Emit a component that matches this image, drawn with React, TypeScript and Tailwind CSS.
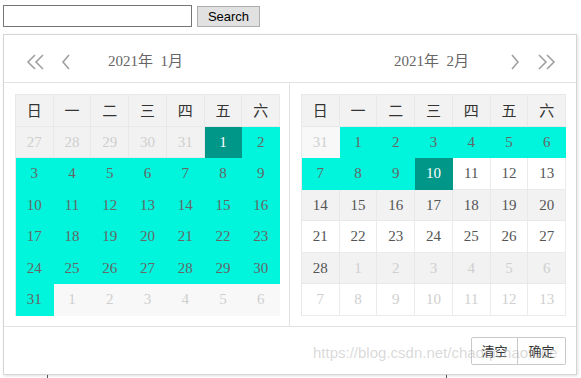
import React from "react";

type Kind =
  | "range"
  | "sel"
  | "norm"
  | "rowgray"
  | "outgray"
  | "out"
  | "outwhite";

type Cell = [string, Kind];

const WEEK = ["日", "一", "二", "三", "四", "五", "六"];

const cellClass: Record<Kind, string> = {
  range: "bg-[#00f5dc] border-[#00f5dc] text-[#666]",
  sel: "bg-[#009688] border-[#009688] text-white",
  norm: "bg-white border-[#ebebeb] text-[#555]",
  rowgray: "bg-[#f2f2f2] border-[#e8e8e8] text-[#555]",
  outgray: "bg-[#f2f2f2] border-[#e8e8e8] text-[#cfcfcf]",
  out: "bg-[#f8f8f8] border-[#f8f8f8] text-[#cfcfcf]",
  outwhite: "bg-white border-[#ebebeb] text-[#cfcfcf]",
};

const seq = (from: number, to: number, kind: Kind): Cell[] => {
  const out: Cell[] = [];
  for (let i = from; i <= to; i++) out.push([String(i), kind]);
  return out;
};

const januaryCells: Cell[] = [
  ...seq(27, 31, "outgray"),
  ["1", "sel"],
  ["2", "range"],
  ...seq(3, 31, "range"),
  ...seq(1, 6, "out"),
];

const februaryCells: Cell[] = [
  ["31", "out"],
  ...seq(1, 9, "range"),
  ["10", "sel"],
  ...seq(11, 13, "norm"),
  ...seq(14, 20, "rowgray"),
  ...seq(21, 27, "norm"),
  ["28", "rowgray"],
  ...seq(1, 6, "outgray"),
  ...seq(7, 13, "outwhite"),
];

const serif = "font-['Liberation_Serif','Noto_Sans_CJK_SC',serif]";
const cjk = "font-['Noto_Sans_CJK_SC','Liberation_Sans',sans-serif]";

const DoubleLeft = () => (
  <svg width="19" height="16" viewBox="0 0 19 16" fill="none" stroke="#a0a0a0" strokeWidth="1.6">
    <path d="M9 1 L2 8 L9 15" />
    <path d="M17 1 L10 8 L17 15" />
  </svg>
);

const SingleLeft = () => (
  <svg width="10" height="16" viewBox="0 0 10 16" fill="none" stroke="#a0a0a0" strokeWidth="1.6">
    <path d="M8 1 L2 8 L8 15" />
  </svg>
);

const SingleRight = () => (
  <svg width="10" height="16" viewBox="0 0 10 16" fill="none" stroke="#a0a0a0" strokeWidth="1.6">
    <path d="M2 1 L8 8 L2 15" />
  </svg>
);

const DoubleRight = () => (
  <svg width="19" height="16" viewBox="0 0 19 16" fill="none" stroke="#a0a0a0" strokeWidth="1.6">
    <path d="M2 1 L9 8 L2 15" />
    <path d="M10 1 L17 8 L10 15" />
  </svg>
);

const MonthTable: React.FC<{ cells: Cell[] }> = ({ cells }) => (
  <div className="grid grid-cols-7 grid-rows-7 w-[265px] h-[222px] border-l border-t border-[#e8e8e8]">
    {WEEK.map((w) => (
      <div
        key={w}
        className={`flex items-center justify-center bg-[#f2f2f2] border-r border-b border-[#e8e8e8] text-[15px] text-[#333] ${cjk}`}
      >
        {w}
      </div>
    ))}
    {cells.map(([label, kind], i) => (
      <div
        key={i}
        className={`flex items-center justify-center border-r border-b text-[15px] ${serif} ${cellClass[kind]}`}
      >
        {label}
      </div>
    ))}
  </div>
);

const App: React.FC = () => {
  return (
    <div className="w-[581px] h-[378px] bg-white overflow-hidden relative font-['Liberation_Sans',sans-serif]">
      <div className="flex items-center gap-[5px] pl-[3px] pt-[5px]">
        <input className="w-[189px] h-[22px] border border-[#767676] outline-none px-1 text-[13px]" />
        <button className="w-[63px] h-[21px] bg-[#e1e1e1] border border-[#adadad] text-[13px] text-black leading-none">
          Search
        </button>
      </div>

      <div className="ml-[3px] mt-[7px] w-[574px] h-[341px] border border-[#d6d6d6] bg-white shadow-[1px_1px_3px_rgba(0,0,0,0.12)] flex flex-col">
        <div className="flex h-[48px] pt-[6px] border-b border-[#e2e2e2]">
          <div className="w-[286px] flex items-center pl-[22px] relative">
            <DoubleLeft />
            <span className="ml-[16px]">
              <SingleLeft />
            </span>
            <span className={`absolute left-[104px] text-[15px] text-[#666] ${serif}`}>
              2021年&nbsp;&nbsp;1月
            </span>
          </div>
          <div className="flex-1 flex items-center justify-end pr-[20px] relative">
            <span className={`absolute left-[104px] text-[15px] text-[#666] ${serif}`}>
              2021年&nbsp;&nbsp;2月
            </span>
            <SingleRight />
            <span className="ml-[17px]">
              <DoubleRight />
            </span>
          </div>
        </div>

        <div className="flex h-[244px] border-b border-[#e2e2e2]">
          <div className="w-[286px] border-r border-[#e2e2e2] pl-[11px] pt-[11px]">
            <MonthTable cells={januaryCells} />
          </div>
          <div className="flex-1 pl-[11px] pt-[11px]">
            <MonthTable cells={februaryCells} />
          </div>
        </div>

        <div className="flex-1 flex items-center justify-end pr-[10px] pt-[1px]">
          <div className={`flex h-[28px] text-[13px] text-[#333] ${cjk}`}>
            <button className="w-[47px] h-full border border-[#c9c9c9] rounded-l-[2px] bg-white">清空</button>
            <button className="w-[48px] h-full border border-l-0 border-[#c9c9c9] rounded-r-[2px] bg-white">确定</button>
          </div>
        </div>
      </div>

      <div className="relative h-[3px]">
        <div className="absolute left-[47px] top-0 w-px h-[3px] bg-[#555]" />
        <div className="absolute left-[446px] top-0 w-px h-[3px] bg-[#555]" />
      </div>

      <div className="absolute left-[313px] top-[342px] text-[15px] text-[rgba(170,170,170,0.45)] pointer-events-none whitespace-nowrap">
        https://blog.csdn.net/chaoqichaotuoe
      </div>
    </div>
  );
};

export default App;
